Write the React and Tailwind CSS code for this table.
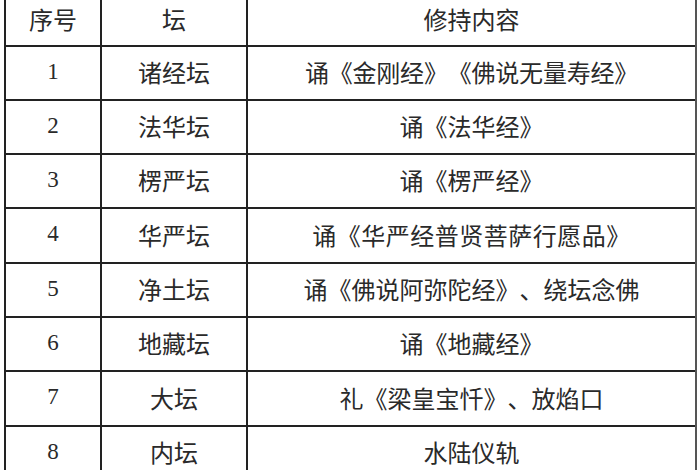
import React from "react";

const rows = [
  { no: "1", altar: "诸经坛", content: "诵《金刚经》《佛说无量寿经》", h: "h-[54px]", t: "tracking-[-0.2px]" },
  { no: "2", altar: "法华坛", content: "诵《法华经》", h: "h-[54px]", t: "" },
  { no: "3", altar: "楞严坛", content: "诵《楞严经》", h: "h-[54px]", t: "" },
  { no: "4", altar: "华严坛", content: "诵《华严经普贤菩萨行愿品》", h: "h-[55px]", t: "tracking-[0.5px]" },
  { no: "5", altar: "净土坛", content: "诵《佛说阿弥陀经》、绕坛念佛", h: "h-[54px]", t: "" },
  { no: "6", altar: "地藏坛", content: "诵《地藏经》", h: "h-[54px]", t: "" },
  { no: "7", altar: "大坛", content: "礼《梁皇宝忏》、放焰口", h: "h-[55px]", t: "" },
  { no: "8", altar: "内坛", content: "水陆仪轨", h: "h-[54px]", t: "" },
];

const cjk = "font-['Noto_Sans_CJK_SC',sans-serif]";
const cell = "flex items-center justify-center pb-[2px]";

export default function App() {
  return (
    <div className="h-[470px] w-[700px] overflow-hidden bg-white">
      <div
        className={`ml-[4px] w-[693px] border-l-2 border-r-2 border-l-[#222] border-r-[#555] text-[24px] text-[#2a2a2a] [text-spacing-trim:space-all] ${cjk}`}
      >
        {/* header */}
        <div className="grid h-[47px] grid-cols-[96px_146px_1fr] border-b-2 border-[#222]">
          <div className="flex items-center justify-center border-r-2 border-[#222] pb-[7px]">序号</div>
          <div className="flex items-center justify-center border-r-2 border-[#222] pb-[7px]">坛</div>
          <div className="flex items-center justify-center pb-[7px]">修持内容</div>
        </div>
        {rows.map((r) => (
          <div key={r.no} className={`grid ${r.h} grid-cols-[96px_146px_1fr] border-b-2 border-[#222]`}>
            <div className={`${cell} border-r-2 border-[#222] font-['Liberation_Serif',serif] text-[23px]`}>{r.no}</div>
            <div className={`${cell} border-r-2 border-[#222]`}>{r.altar}</div>
            <div className={`${cell} whitespace-nowrap ${r.t}`}>{r.content}</div>
          </div>
        ))}
      </div>
    </div>
  );
}
